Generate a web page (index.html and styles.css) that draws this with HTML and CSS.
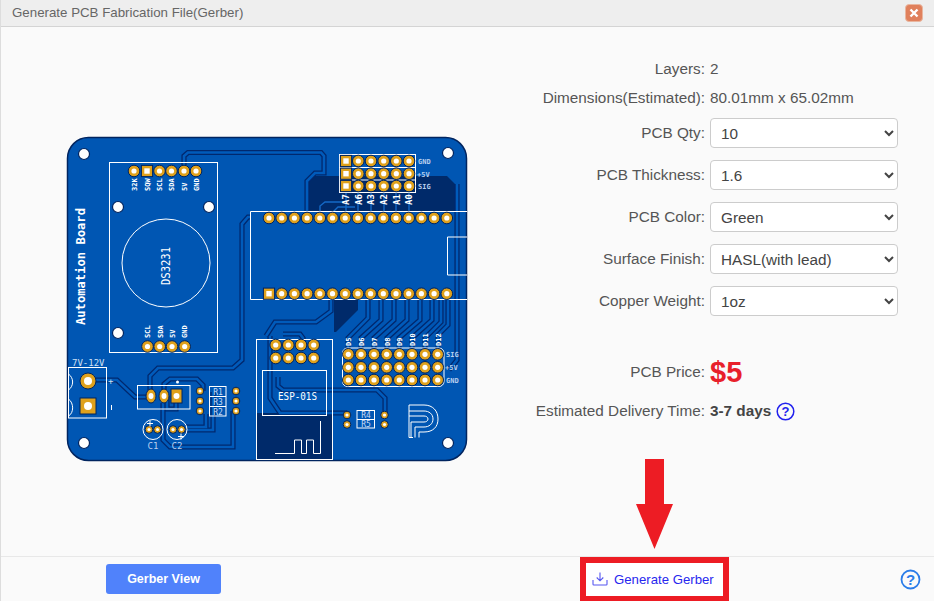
FILE: index.html
```html
<!DOCTYPE html>
<html lang="en">
<head>
<meta charset="utf-8">
<title>Generate PCB Fabrication File(Gerber)</title>
<link rel="stylesheet" href="styles.css">
</head>
<body>
<div class="dialog">
  <header class="titlebar">
    <span class="title">Generate PCB Fabrication File(Gerber)</span>
    <button class="close" aria-label="Close">
      <svg width="10" height="10" viewBox="0 0 10 10"><path class="close-x" d="M1.5 1.5 8.5 8.5M8.5 1.5 1.5 8.5"/></svg>
    </button>
  </header>
  <main class="content">
    <div class="board-wrap">
      <svg class="board" width="420" height="340" viewBox="60 130 420 340">
        <defs>
          <g id="pad"><circle class="pad" r="5.8"/><circle class="hole" r="2.6"/></g>
          <g id="sq"><rect class="pad" x="-5.6" y="-5.6" width="11.2" height="11.2"/><rect class="hole" x="-2.7" y="-2.7" width="5.4" height="5.4"/></g>
          <g id="smallpad"><circle class="pad" r="3.8"/><circle class="hole" r="1.6"/></g>
          <g id="traces">
            <path d="M184 165V156L188 152.500H321L324 156V173H315L307 181V211"/>
            <path d="M250 217H248L242 224V360L233 368H158L150 376V392"/>
            <path d="M94 380H117L135 397H150"/>
            <path d="M164 396V384L170 379H197L203 385V391"/>
            <path d="M176 402V409H167V396"/>
            <path d="M163 403V440L170 447H233V411"/>
            <path d="M185 427H206V414"/>
            <path d="M181 430H213V392"/>
            <path d="M266 336L275 322H316L331 311V300"/>
            <path d="M270 336V398L280 413H347"/>
            <path d="M283 334H300L303 338V350"/>
            <path d="M278 377V386L283 390H377L385 398V415"/>
            <path d="M348 348V338L368 318V300"/>
            <path d="M361 348V338L381 320V300"/>
            <path d="M374 348V338L394 320V300"/>
            <path d="M387 348V338L407 320V300"/>
            <path d="M399 348V338L420 320V300"/>
            <path d="M412 348V338L432 320V300"/>
            <path d="M425 348V338L441 322V300"/>
            <path d="M438 348V335L448 325V300"/>
            <path d="M457 184V360L449 370"/>
          </g>
          <g id="lightTraces">
            <path d="M346 192V211M358 192V218M371 192V218M384 192V218M396 192V218M409 192V218"/>
            <path d="M320 218V206L325 202H343"/>
            <path d="M333 218V212L338 207H355"/>
          </g>
        </defs>

        <rect class="board-shape" x="67.5" y="137.5" width="399" height="323" rx="21"/>
        <path class="dark-fill" d="M315 176H447L455 184V211H309V182Z"/>
        <path class="dark-fill" d="M334 300H358V310L336 332H334Z"/>
        <path class="dark-fill" d="M257 413H332V459H257Z"/>

        <use href="#traces" class="trace-out"/>
        <use href="#traces" class="trace-in"/>
        <use href="#lightTraces" class="trace-light"/>

        <circle class="drill" cx="84" cy="154" r="5.5"/>
        <circle class="drill" cx="448" cy="153" r="5.5"/>
        <circle class="drill" cx="84" cy="443" r="5.5"/>
        <circle class="drill" cx="448" cy="443" r="5.5"/>
        <circle class="drill" cx="118" cy="207" r="5.5"/>
        <circle class="drill" cx="209" cy="207" r="5.5"/>
        <circle class="drill" cx="118" cy="333" r="5.5"/>

        <!-- RTC module -->
        <rect class="silk" x="109.5" y="162.5" width="108" height="190"/>
        <circle class="silk" cx="166" cy="263" r="44"/>
        <text class="silk-text big" transform="translate(170 266) rotate(-90)" text-anchor="middle" textLength="38" lengthAdjust="spacingAndGlyphs">DS3231</text>
        <text class="silk-text name" transform="translate(85 266.500) rotate(-90)" text-anchor="middle" textLength="117" lengthAdjust="spacingAndGlyphs">Automation Board</text>
        <g class="silk-text tiny">
          <text transform="translate(137 191) rotate(-90)">32K</text>
          <text transform="translate(149.500 191) rotate(-90)">SQW</text>
          <text transform="translate(162 191) rotate(-90)">SCL</text>
          <text transform="translate(174 191) rotate(-90)">SDA</text>
          <text transform="translate(186.500 191) rotate(-90)">5V</text>
          <text transform="translate(198.500 191) rotate(-90)">GND</text>
          <text transform="translate(150 338) rotate(-90)">SCL</text>
          <text transform="translate(162.500 338) rotate(-90)">SDA</text>
          <text transform="translate(175 338) rotate(-90)">5V</text>
          <text transform="translate(187 338) rotate(-90)">GND</text>
        </g>
        <use href="#pad" x="134" y="171"/><use href="#sq" x="147" y="171"/><use href="#pad" x="159.500" y="171"/><use href="#pad" x="171.500" y="171"/><use href="#pad" x="184" y="171"/><use href="#pad" x="196" y="171"/>
        <use href="#pad" x="147.500" y="346.500"/><use href="#pad" x="159.700" y="346.500"/><use href="#pad" x="172" y="346.500"/><use href="#pad" x="184.700" y="346.500"/>

        <!-- A header -->
        <rect class="silk" x="339.500" y="154.500" width="76" height="38"/>
        <path class="silk" d="M340 167.500H415M340 180H415"/>
        <use href="#sq" x="346" y="161"/><use href="#pad" x="358.300" y="161"/><use href="#pad" x="371" y="161"/><use href="#pad" x="383.700" y="161"/><use href="#pad" x="396.300" y="161"/><use href="#pad" x="409" y="161"/>
        <use href="#sq" x="346" y="173.700"/><use href="#pad" x="358.300" y="173.700"/><use href="#pad" x="371" y="173.700"/><use href="#pad" x="383.700" y="173.700"/><use href="#pad" x="396.300" y="173.700"/><use href="#pad" x="409" y="173.700"/>
        <use href="#sq" x="346" y="186"/><use href="#pad" x="358.300" y="186"/><use href="#pad" x="371" y="186"/><use href="#pad" x="383.700" y="186"/><use href="#pad" x="396.300" y="186"/><use href="#pad" x="409" y="186"/>
        <g class="silk-text tiny dim">
          <text x="418" y="164">GND</text><text x="417" y="177">+5V</text><text x="418" y="189">SIG</text>
        </g>
        <g class="silk-text small">
          <text transform="translate(349 205) rotate(-90)">A7</text>
          <text transform="translate(361.500 205) rotate(-90)">A6</text>
          <text transform="translate(374 205) rotate(-90)">A3</text>
          <text transform="translate(387 205) rotate(-90)">A2</text>
          <text transform="translate(399.500 205) rotate(-90)">A1</text>
          <text transform="translate(412 205) rotate(-90)">A0</text>
        </g>

        <!-- Arduino module -->
        <path class="silk" d="M467 211.500H250.500V299.500H467"/>
        <path class="silk" d="M467 237H447.500V275H467"/>
        <g>
          <use href="#pad" x="269" y="218"/><use href="#pad" x="281.700" y="218"/><use href="#pad" x="294.400" y="218"/><use href="#pad" x="307.100" y="218"/><use href="#pad" x="319.800" y="218"/><use href="#pad" x="332.500" y="218"/><use href="#pad" x="345.200" y="218"/><use href="#pad" x="357.900" y="218"/><use href="#pad" x="370.600" y="218"/><use href="#pad" x="383.300" y="218"/><use href="#pad" x="396" y="218"/><use href="#pad" x="408.700" y="218"/><use href="#pad" x="421.400" y="218"/><use href="#pad" x="434.100" y="218"/><use href="#pad" x="446.800" y="218"/>
          <use href="#sq" x="269" y="293.700"/><use href="#pad" x="281.700" y="293.700"/><use href="#pad" x="294.400" y="293.700"/><use href="#pad" x="307.100" y="293.700"/><use href="#pad" x="319.800" y="293.700"/><use href="#pad" x="332.500" y="293.700"/><use href="#pad" x="345.200" y="293.700"/><use href="#pad" x="357.900" y="293.700"/><use href="#pad" x="370.600" y="293.700"/><use href="#pad" x="383.300" y="293.700"/><use href="#pad" x="396" y="293.700"/><use href="#pad" x="408.700" y="293.700"/><use href="#pad" x="421.400" y="293.700"/><use href="#pad" x="434.100" y="293.700"/><use href="#pad" x="446.800" y="293.700"/>
        </g>

        <!-- D header -->
        <rect class="silk" x="342.500" y="348" width="101.500" height="38.500" rx="5"/>
        <g>
          <use href="#pad" x="348.300" y="354.300"/><use href="#pad" x="361" y="354.300"/><use href="#pad" x="374" y="354.300"/><use href="#pad" x="386.700" y="354.300"/><use href="#pad" x="399.300" y="354.300"/><use href="#pad" x="412" y="354.300"/><use href="#pad" x="425" y="354.300"/><use href="#pad" x="437.700" y="354.300"/>
          <use href="#pad" x="348.300" y="367.300"/><use href="#pad" x="361" y="367.300"/><use href="#pad" x="374" y="367.300"/><use href="#pad" x="386.700" y="367.300"/><use href="#pad" x="399.300" y="367.300"/><use href="#pad" x="412" y="367.300"/><use href="#pad" x="425" y="367.300"/><use href="#pad" x="437.700" y="367.300"/>
          <use href="#pad" x="348.300" y="380"/><use href="#pad" x="361" y="380"/><use href="#pad" x="374" y="380"/><use href="#pad" x="386.700" y="380"/><use href="#pad" x="399.300" y="380"/><use href="#pad" x="412" y="380"/><use href="#pad" x="425" y="380"/><use href="#pad" x="437.700" y="380"/>
        </g>
        <g class="silk-text tiny">
          <text transform="translate(351 346) rotate(-90)">D5</text>
          <text transform="translate(364 346) rotate(-90)">D6</text>
          <text transform="translate(377 346) rotate(-90)">D7</text>
          <text transform="translate(389.500 346) rotate(-90)">D8</text>
          <text transform="translate(402 346) rotate(-90)">D9</text>
          <text transform="translate(415 346) rotate(-90)">D10</text>
          <text transform="translate(428 346) rotate(-90)">D11</text>
          <text transform="translate(440.500 346) rotate(-90)">D12</text>
        </g>
        <g class="silk-text tiny dim">
          <text x="446" y="357">SIG</text><text x="445" y="370">+5V</text><text x="446" y="383">GND</text>
        </g>

        <!-- ESP module -->
        <rect class="silk" x="256.500" y="339.500" width="76" height="120"/>
        <rect class="silk" x="262.500" y="370.500" width="64" height="45"/>
        <text class="silk-text esp" x="297.500" y="400" text-anchor="middle" textLength="39" lengthAdjust="spacingAndGlyphs">ESP-01S</text>
        <path class="silk-thin" d="M275 453.500H294.500V440H301.500V453.500H306.500V440H313.500V453.500H320.500V421"/>
        <use href="#pad" x="275.700" y="345"/><use href="#pad" x="288.300" y="345"/><use href="#pad" x="301" y="345"/><use href="#pad" x="313.700" y="345"/>
        <use href="#pad" x="275.700" y="358"/><use href="#pad" x="288.300" y="358"/><use href="#pad" x="301" y="358"/><use href="#pad" x="313.700" y="358"/>

        <!-- R4 R5 -->
        <rect class="silk" x="357" y="410.500" width="17.500" height="17.500"/>
        <path class="silk" d="M357 419.500H374.500"/>
        <text class="silk-text res" x="366" y="418" text-anchor="middle">R4</text>
        <text class="silk-text res" x="366" y="427" text-anchor="middle">R5</text>
        <use href="#smallpad" x="347" y="415"/><use href="#smallpad" x="347" y="424.500"/><use href="#smallpad" x="384.500" y="415"/><use href="#smallpad" x="384.500" y="424.500"/>

        <!-- Logo -->
        <g class="logo">
          <path d="M409 405H424C433 405 438 411 438 419C438 427 433 432 424 432H419V437.500"/>
          <path d="M409 405V437.500H413"/>
          <path d="M409 411H424C429 411 433 414 433 419C433 424 429 427 424 427H415V437.500"/>
          <path d="M409 416H424C426 416 428 417 428 419C428 421 426 422 424 422H411V437.500"/>
        </g>

        <!-- Power -->
        <rect class="silk" x="68.500" y="367.500" width="38" height="50.500"/>
        <path class="silk" d="M68.500 374C74 378 74 386 68.500 390M68.500 399C74 403 74 413 68.500 416"/>
        <text class="silk-text label" x="72" y="366">7V-12V</text>
        <circle class="pad" cx="88" cy="381" r="8"/><circle class="hole" cx="88" cy="381" r="4"/>
        <rect class="pad" x="80" y="398" width="16" height="16"/><circle class="hole" cx="88" cy="406" r="4"/>
        <text class="silk-text label" x="108" y="384">+</text>
        <path class="silk-thin" d="M111.500 405V410"/>

        <!-- Regulator -->
        <rect class="silk" x="137.500" y="385.500" width="52.500" height="23.500"/>
        <circle class="silk-dot" cx="177.500" cy="382" r="1.500"/>
        <ellipse class="pad" cx="151" cy="396" rx="5" ry="7"/><ellipse class="hole" cx="151" cy="396" rx="2.500" ry="3"/>
        <ellipse class="pad" cx="164" cy="396" rx="5" ry="7"/><ellipse class="hole" cx="164" cy="396" rx="2.500" ry="3"/>
        <rect class="pad" x="171" y="389" width="11" height="14"/><circle class="hole" cx="176.500" cy="396" r="3"/>

        <!-- R1 R3 R2 -->
        <rect class="silk" x="209.500" y="386.500" width="16.500" height="29.500"/>
        <path class="silk" d="M209.500 396.500H226M209.500 406.500H226"/>
        <text class="silk-text res" x="218" y="395" text-anchor="middle">R1</text>
        <text class="silk-text res" x="218" y="405" text-anchor="middle">R3</text>
        <text class="silk-text res" x="218" y="415" text-anchor="middle">R2</text>
        <use href="#smallpad" x="200" y="391"/><use href="#smallpad" x="200" y="401"/><use href="#smallpad" x="200" y="411"/>
        <use href="#smallpad" x="236" y="391"/><use href="#smallpad" x="236" y="401"/><use href="#smallpad" x="236" y="411"/>

        <!-- Capacitors -->
        <circle class="silk" cx="153" cy="429.500" r="10"/>
        <circle class="silk" cx="177" cy="429.500" r="10"/>
        <use href="#smallpad" x="149" y="429.500"/><use href="#smallpad" x="157.500" y="429.500"/>
        <use href="#smallpad" x="173" y="429.500"/><use href="#smallpad" x="181.500" y="429.500"/>
        <path class="silk" d="M147 423.500H153M150 420.500V426.500M178 436.500H184M181 433.500V439.500"/>
        <text class="silk-text label dim" x="153" y="449" text-anchor="middle">C1</text>
        <text class="silk-text label dim" x="177" y="449" text-anchor="middle">C2</text>
      </svg>
    </div>

    <div class="form">
      <div class="row info"><span class="label">Layers:</span><span class="value">2</span></div>
      <div class="row info gap-below"><span class="label">Dimensions(Estimated):</span><span class="value">80.01mm x 65.02mm</span></div>
      <div class="row field"><label class="label">PCB Qty:</label><select class="select"><option>10</option></select></div>
      <div class="row field"><label class="label">PCB Thickness:</label><select class="select"><option>1.6</option></select></div>
      <div class="row field"><label class="label">PCB Color:</label><select class="select"><option>Green</option></select></div>
      <div class="row field"><label class="label">Surface Finish:</label><select class="select"><option>HASL(with lead)</option></select></div>
      <div class="row field"><label class="label">Copper Weight:</label><select class="select"><option>1oz</option></select></div>
      <div class="row price"><span class="label">PCB Price:</span><span class="amount">$5</span></div>
      <div class="row delivery">
        <span class="label">Estimated Delivery Time:</span>
        <span class="value strong">3-7 days</span>
        <svg class="q-icon" width="19" height="19" viewBox="0 0 19 19"><circle class="q-ring" cx="9.500" cy="9.500" r="8.300"/><text class="q-mark" x="9.500" y="14" text-anchor="middle">?</text></svg>
      </div>
    </div>
  </main>

  <footer class="footer">
    <button class="view-btn">Gerber View</button>
    <button class="generate-btn">
      <svg width="16" height="14" viewBox="0 0 16 14"><path class="dl-icon" d="M8 .5V8.500M4.700 5.500 8 8.800 11.300 5.500M1 8V12.200Q1 13 1.800 13H14.200Q15 13 15 12.200V8"/></svg>
      <span>Generate Gerber</span>
    </button>
    <svg class="help" width="21" height="21" viewBox="0 0 21 21"><circle class="help-ring" cx="10.500" cy="10.500" r="9"/><text class="help-mark" x="10.500" y="15.500" text-anchor="middle">?</text></svg>
  </footer>

  <svg class="arrow" width="38" height="91" viewBox="0 0 38 91"><path class="arrow-shape" d="M9 0H28V45H37L18.500 90 0 45H9Z"/></svg>
</div>
</body>
</html>
```

FILE: styles.css
```css
* { box-sizing: border-box; }
html, body { margin: 0; padding: 0; }
body {
  width: 934px;
  height: 601px;
  overflow: hidden;
  background: #fafafa;
  font-family: "Liberation Sans", Arial, sans-serif;
  color: #555;
}
.dialog {
  position: relative;
  width: 934px;
  height: 601px;
  display: flex;
  flex-direction: column;
  background: #fafafa;
  border-left: 1px solid #ddd;
}
.titlebar {
  height: 27px;
  flex: none;
  display: flex;
  align-items: center;
  justify-content: space-between;
  padding: 0 11px 2px 11px;
  background: #eee;
  border-bottom: 1px solid #d4d4d4;
}
.title { font-size: 13.300px; color: #666; }
.close {
  width: 18px;
  height: 18px;
  margin-top: 2px;
  padding: 0;
  border: 1px solid #e9b69f;
  border-radius: 4px;
  background: #e0805c;
  display: flex;
  align-items: center;
  justify-content: center;
}
.close-x { stroke: #fff; stroke-width: 2.4; fill: none; }

.content {
  flex: 1;
  display: flex;
  min-height: 0;
  padding-top: 27px;
}
.board-wrap { width: 519px; padding-left: 59px; padding-top: 76px; flex: none; }
.board { display: block; }
.board-shape { fill: #0056b3; stroke: #00245f; stroke-width: 1.500; }
.dark-fill { fill: #002a6a; }
.trace-out { fill: none; stroke: #00286e; stroke-width: 5.200; }
.trace-in { fill: none; stroke: #005bbb; stroke-width: 2.600; }
.trace-light { fill: none; stroke: #1469c6; stroke-width: 1.400; }
.drill { fill: #fff; stroke: #00245f; stroke-width: 1.200; }
.silk { fill: none; stroke: #fff; stroke-width: 1; }
.silk-thin { fill: none; stroke: #fff; stroke-width: 1; }
.silk-dot { fill: #fff; }
.pad { fill: #dfa11c; stroke: #00245f; stroke-width: 1; }
.hole { fill: #fff; }
.silk-text { fill: #fff; font-family: "DejaVu Sans Mono", monospace; }
.silk-text.tiny { font-size: 7px; font-weight: 700; }
.silk-text.small { font-size: 9px; font-weight: 700; }
.silk-text.big { font-size: 12px; }
.silk-text.name { font-size: 13px; font-weight: 700; }
.silk-text.esp { font-size: 10px; }
.silk-text.res { font-size: 8px; fill: #c9dcf5; }
.silk-text.label { font-size: 9px; fill: #cfe0f5; }
.silk-text.dim { fill: #b9cfee; }
.logo path { fill: none; stroke: #fff; stroke-width: 1; }

.form { width: 378px; flex: none; }
.row { display: flex; align-items: center; font-size: 15.300px; }
.label { width: 185px; flex: none; text-align: right; color: #555; }
.value { margin-left: 5px; color: #555; }
.info { height: 29px; }
.gap-below { margin-bottom: 6px; }
.field { height: 30px; margin-bottom: 12px; }
.select {
  width: 188px;
  height: 30px;
  margin-left: 5px;
  padding: 0 6px;
  border: 1px solid #ccc;
  border-radius: 4px;
  background: #fff;
  font-family: inherit;
  font-size: 15.300px;
  color: #444;
}
.price { margin-top: 42px; height: 28px; }
.amount { margin-left: 5px; color: #e8202a; font-size: 29px; font-weight: 700; line-height: 28px; }
.delivery { margin-top: 14px; height: 22px; }
.strong { font-weight: 700; color: #444; }
.q-icon { margin-left: 5px; }
.q-ring { fill: none; stroke: #2222ee; stroke-width: 1.500; }
.q-mark { fill: #2222ee; font-size: 13px; font-weight: 700; font-family: "Liberation Sans", Arial, sans-serif; }

.footer {
  height: 45px;
  flex: none;
  display: flex;
  align-items: center;
  border-top: 1px solid #e8e8e8;
}
.view-btn {
  width: 115px;
  height: 30px;
  margin-left: 105px;
  border: 0;
  border-radius: 3px;
  background: #5082fb;
  color: #fff;
  font-family: inherit;
  font-size: 12.500px;
  font-weight: 700;
}
.generate-btn {
  width: 149px;
  height: 45px;
  margin-left: 359px;
  padding: 0 0 0 6px;
  display: flex;
  align-items: center;
  gap: 6px;
  border: 6px solid #ed1c24;
  background: #fff;
  color: #2727ee;
  font-family: inherit;
  font-size: 13.200px;
}
.dl-icon { fill: none; stroke: #5757f0; stroke-width: 1.100; }
.help { margin-left: auto; margin-right: 13px; }
.help-ring { fill: none; stroke: #2b7de9; stroke-width: 1.800; }
.help-mark { fill: #2b7de9; font-size: 15px; font-weight: 700; font-family: "Liberation Sans", Arial, sans-serif; }
.arrow { position: absolute; left: 635px; top: 459px; }
.arrow-shape { fill: #ed1c24; }
```
